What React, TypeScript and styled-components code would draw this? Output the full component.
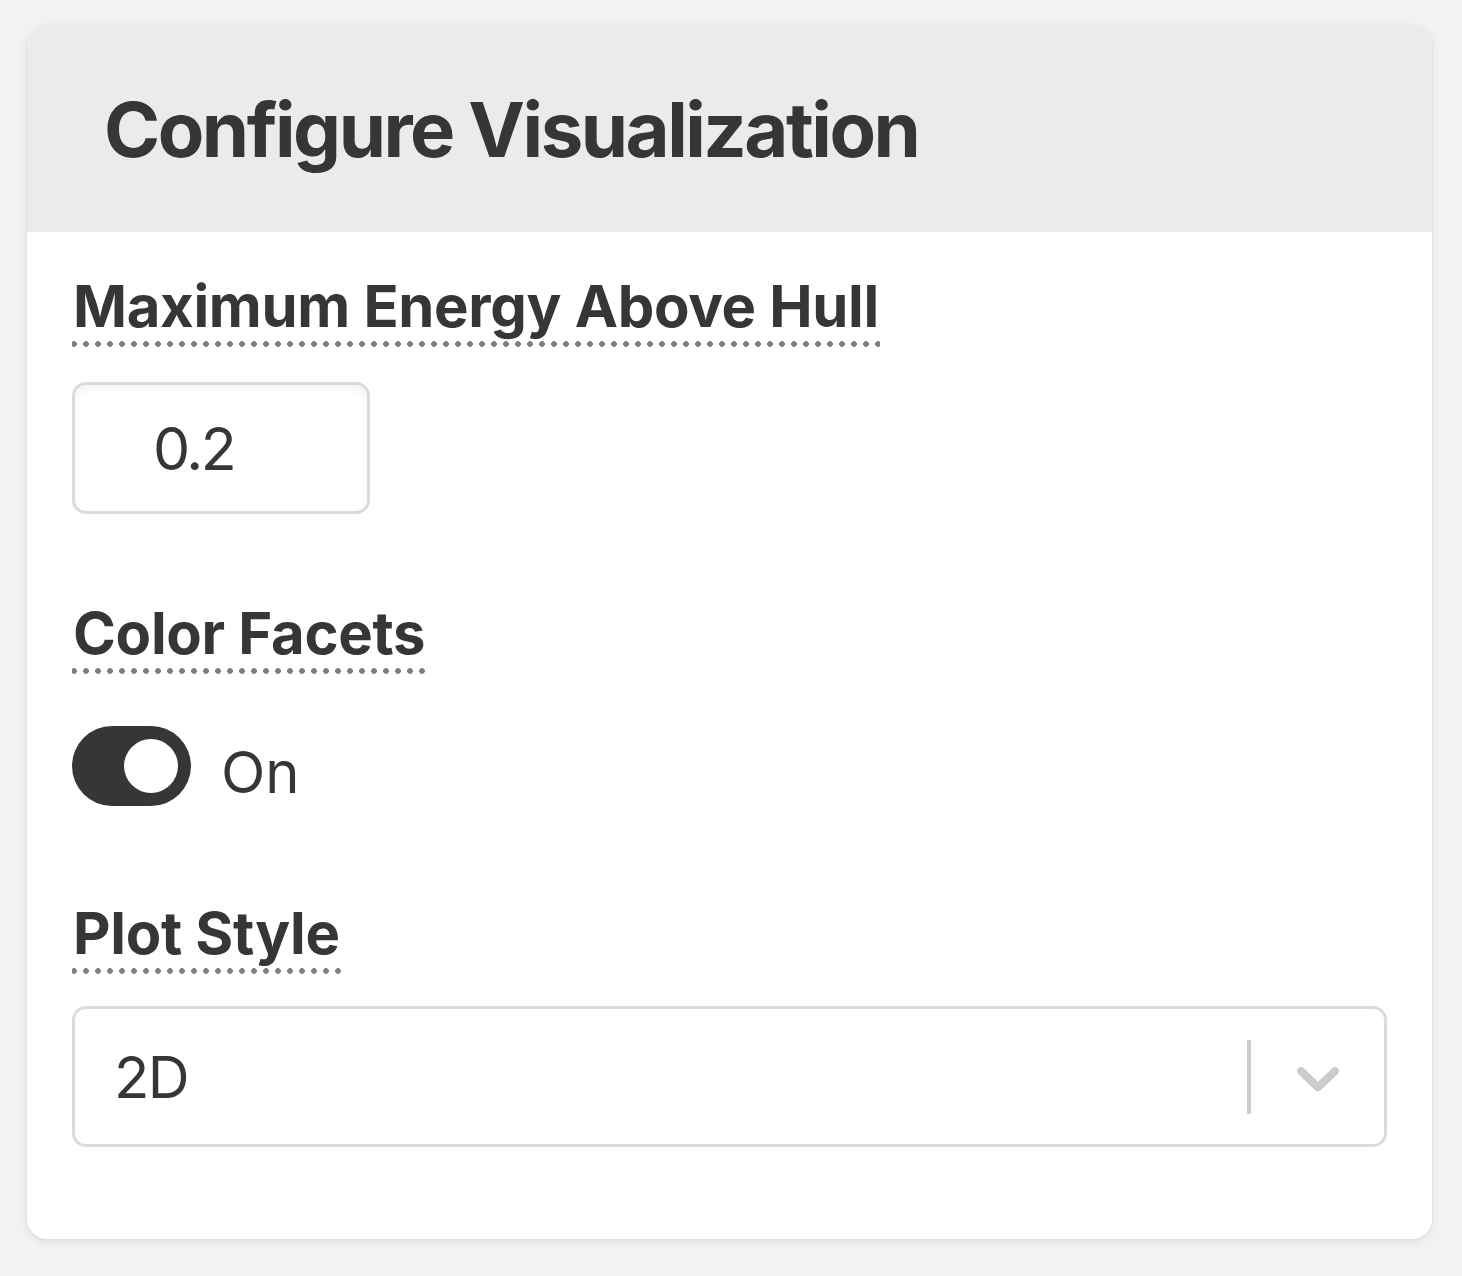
import React from "react";
import styled, { createGlobalStyle } from "styled-components";

const GlobalStyle = createGlobalStyle`
  html, body {
    margin: 0;
    padding: 0;
    background: #f2f2f2;
    font-family: Inter, "Noto Sans", "Liberation Sans", sans-serif;
    color: #363636;
  }
`;

const Page = styled.div`
  padding: 25px 30px 38px 27px;
`;

const Card = styled.section`
  background: #ffffff;
  border-radius: 20px;
  overflow: hidden;
  box-shadow: 0 3px 10px rgba(10, 10, 10, 0.08), 0 0 0 1px rgba(10, 10, 10, 0.03);
`;

const Header = styled.header`
  height: 207px;
  background: #ebebeb;
  display: flex;
  align-items: center;
  padding-left: 77px;
`;

const Title = styled.h1`
  margin: 0;
  font-size: 76px;
  line-height: 1;
  font-weight: 700;
  letter-spacing: -2.5px;
  color: #363636;
`;

const Body = styled.div`
  padding: 39px 45px 92px 45px;
  display: flex;
  flex-direction: column;
`;

const Field = styled.div<{ $gap: number; $top: number }>`
  display: flex;
  flex-direction: column;
  align-items: flex-start;
  gap: ${(p) => p.$gap}px;
  margin-top: ${(p) => p.$top}px;
`;

const Label = styled.span`
  display: inline-block;
  font-size: 58px;
  line-height: 70px;
  font-weight: 700;
  letter-spacing: -0.3px;
  color: #363636;
  padding: 0 1px 6px 1px;
  background-image: radial-gradient(circle, #808080 2.6px, transparent 3.1px);
  background-size: 12px 6px;
  background-repeat: repeat-x;
  background-position: -4px bottom;
`;

const NumberBox = styled.div`
  box-sizing: border-box;
  width: 298px;
  height: 132px;
  border: 3px solid #dbdbdb;
  border-radius: 14px;
  box-shadow: inset 0 4px 8px rgba(10, 10, 10, 0.05);
  display: flex;
  align-items: center;
  padding-left: 78px;
  font-size: 59px;
  letter-spacing: -2.5px;
  color: #363636;
`;

const ToggleRow = styled.div`
  display: flex;
  align-items: center;
  gap: 30px;
`;

const Track = styled.span<{ $on: boolean }>`
  box-sizing: border-box;
  width: 119px;
  height: 80px;
  border-radius: 40px;
  background: ${(p) => (p.$on ? "#363636" : "#dbdbdb")};
  display: flex;
  align-items: center;
  justify-content: ${(p) => (p.$on ? "flex-end" : "flex-start")};
  padding: 0 13px;
`;

const Knob = styled.span`
  width: 54px;
  height: 54px;
  border-radius: 50%;
  background: #ffffff;
`;

const ToggleText = styled.span`
  font-size: 58px;
  line-height: 1;
  margin-top: 12px;
  color: #363636;
`;

const Select = styled.div`
  box-sizing: border-box;
  align-self: stretch;
  height: 141px;
  border: 3px solid #dbdbdb;
  border-radius: 14px;
  display: flex;
  align-items: center;
`;

const SelectValue = styled.span`
  flex: 1;
  padding-left: 39px;
  font-size: 58px;
  line-height: 1;
  letter-spacing: -1.5px;
  color: #363636;
`;

const Separator = styled.span`
  width: 4px;
  height: 74px;
  background: #cccccc;
`;

const Indicator = styled.span`
  display: flex;
  align-items: center;
  padding: 0 30px 0 31px;
  color: #cccccc;
`;

const Chevron = () => (
  <svg width="72" height="72" viewBox="0 0 20 20" fill="currentColor" aria-hidden="true">
    <path d="M4.516 7.548c0.436-0.446 1.043-0.481 1.576 0l3.908 3.747 3.908-3.747c0.533-0.481 1.141-0.446 1.574 0 0.436 0.445 0.408 1.197 0 1.615-0.406 0.418-4.695 4.502-4.695 4.502-0.217 0.223-0.502 0.335-0.787 0.335s-0.57-0.112-0.789-0.335c0 0-4.287-4.084-4.695-4.502s-0.436-1.17 0-1.615z" />
  </svg>
);

export default function App() {
  return (
    <>
      <GlobalStyle />
      <Page>
        <Card>
          <Header>
            <Title>Configure Visualization</Title>
          </Header>
          <Body>
            <Field $gap={35} $top={0}>
              <Label>Maximum Energy Above Hull</Label>
              <NumberBox>0.2</NumberBox>
            </Field>
            <Field $gap={52} $top={84}>
              <Label>Color Facets</Label>
              <ToggleRow>
                <Track $on>
                  <Knob />
                </Track>
                <ToggleText>On</ToggleText>
              </ToggleRow>
            </Field>
            <Field $gap={32} $top={92}>
              <Label>Plot Style</Label>
              <Select>
                <SelectValue>2D</SelectValue>
                <Separator />
                <Indicator>
                  <Chevron />
                </Indicator>
              </Select>
            </Field>
          </Body>
        </Card>
      </Page>
    </>
  );
}
